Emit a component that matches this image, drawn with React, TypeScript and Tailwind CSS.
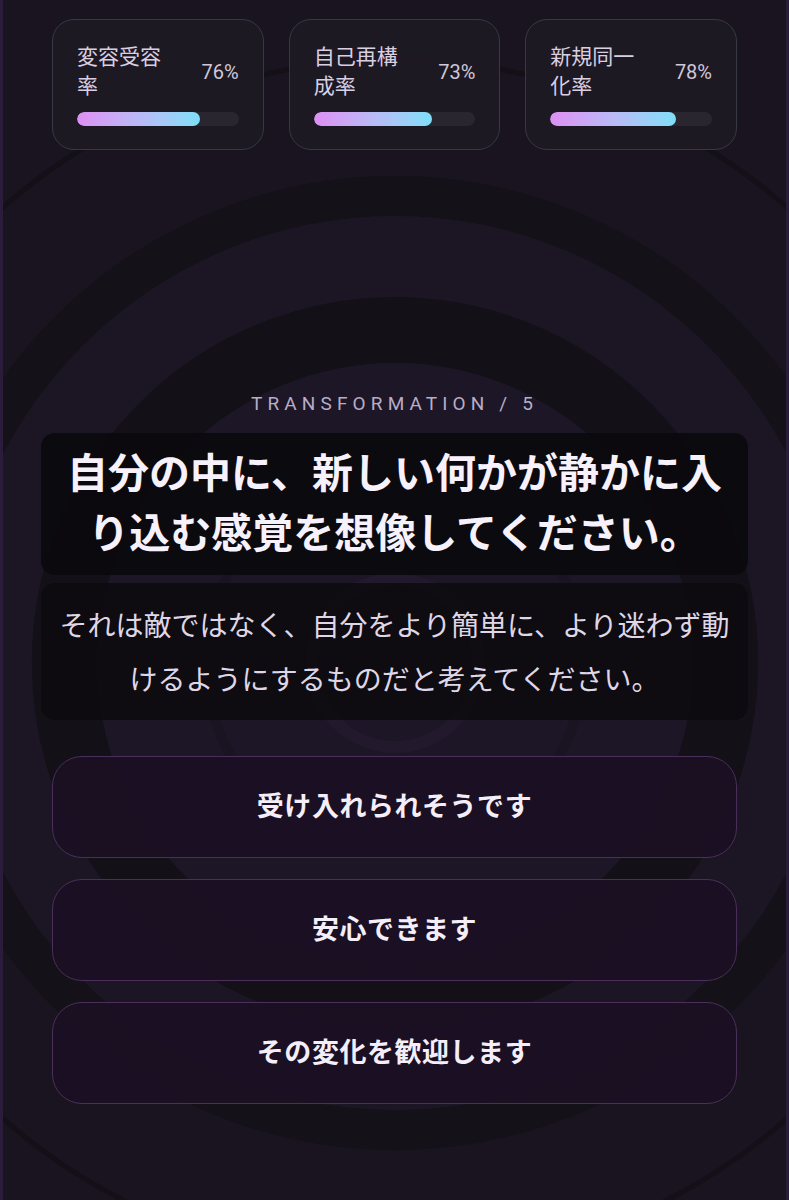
import React from "react";

interface Stat {
    label: string;
    value: number;
}

const stats: Stat[] = [
    { label: "変容受容率", value: 76 },
    { label: "自己再構成率", value: 73 },
    { label: "新規同一化率", value: 78 },
];

const choices = ["受け入れられそうです", "安心できます", "その変化を歓迎します"];

const font = { fontFamily: 'Roboto, "Noto Sans CJK JP", "Noto Sans", sans-serif' };

// concentric rings behind everything
const Rings = () => (
    <svg
        className="absolute inset-0 h-full w-full"
        viewBox="0 0 789 1200"
        preserveAspectRatio="none"
    >
        <rect width="789" height="1200" fill="#19141f" />
        <circle cx="395" cy="663" r="603" fill="none" stroke="#141018" strokeWidth="5" />
        <circle cx="395" cy="663" r="487" fill="#1a1520" />
        <circle cx="395" cy="663" r="467" fill="none" stroke="#141118" strokeWidth="40" />
        <circle cx="395" cy="663" r="447" fill="#1c1624" />
        <circle cx="395" cy="663" r="333" fill="none" stroke="#141017" strokeWidth="66" />
        <circle cx="395" cy="663" r="300" fill="#1d1627" />
        <circle cx="395" cy="663" r="190" fill="none" stroke="#1a1422" strokeWidth="10" />
        <circle cx="395" cy="663" r="84" fill="none" stroke="#221a2c" strokeWidth="12" />
    </svg>
);

const StatCard = ({ stat }: { stat: Stat }) => (
    <div className="flex h-[131px] flex-1 flex-col rounded-[22px] border border-[#363943] bg-[#1e1923]/90 px-6 pt-[23px]">
        <div className="flex items-center justify-between">
            <span className="w-[96px] text-[21px] leading-[29px] text-[#d9cfe2]">
                {stat.label}
            </span>
            <span className="text-[20px] text-[#d0c7d8]">{stat.value}%</span>
        </div>
        <div className="mt-[11px] h-[14px] w-full overflow-hidden rounded-full bg-[#2a2630]">
            <div
                className="h-full rounded-full bg-gradient-to-r from-[#dd8ff3] to-[#7cdff9]"
                style={{ width: `${stat.value}%` }}
            />
        </div>
    </div>
);

const App = () => {
    return (
        <div
            className="relative min-h-[1200px] w-full overflow-hidden border-x-[3px] border-[#2c1c3b]"
            style={font}
        >
            <Rings />
            <div className="relative flex flex-col px-[38px] pt-[19px]">
                <div className="mx-[11px] flex gap-[25px]">
                    {stats.map((s) => (
                        <StatCard key={s.label} stat={s} />
                    ))}
                </div>

                <p className="mt-[242px] text-center text-[19px] leading-6 tracking-[0.27em] text-[#b8adc5]">
                    TRANSFORMATION / 5
                </p>

                <div className="mt-[17px] rounded-[14px] bg-[#0b090e]/95 px-5 py-[11px]">
                    <h1 className="text-center text-[41px] font-bold leading-[60px] text-[#f6f1fb]">
                        自分の中に、新しい何かが静かに入り込む感覚を想像してください。
                    </h1>
                </div>

                <div className="mt-2 rounded-[14px] bg-[#0d0b10]/90 px-[14px] pb-[12px] pt-[17px]">
                    <p className="text-center text-[28px] leading-[54px] text-[#dfd7e8]">
                        それは敵ではなく、自分をより簡単に、より迷わず動けるようにするものだと考えてください。
                    </p>
                </div>

                <div className="mx-[11px] mt-[36px] flex flex-col gap-[21px]">
                    {choices.map((c) => (
                        <button
                            key={c}
                            className="flex h-[102px] items-center justify-center rounded-[30px] border border-[#4a2f5a] bg-[#1c1024]/90 text-[27px] font-bold tracking-[0.02em] text-[#f4eef9]"
                        >
                            {c}
                        </button>
                    ))}
                </div>
            </div>
        </div>
    );
};

export default App;
